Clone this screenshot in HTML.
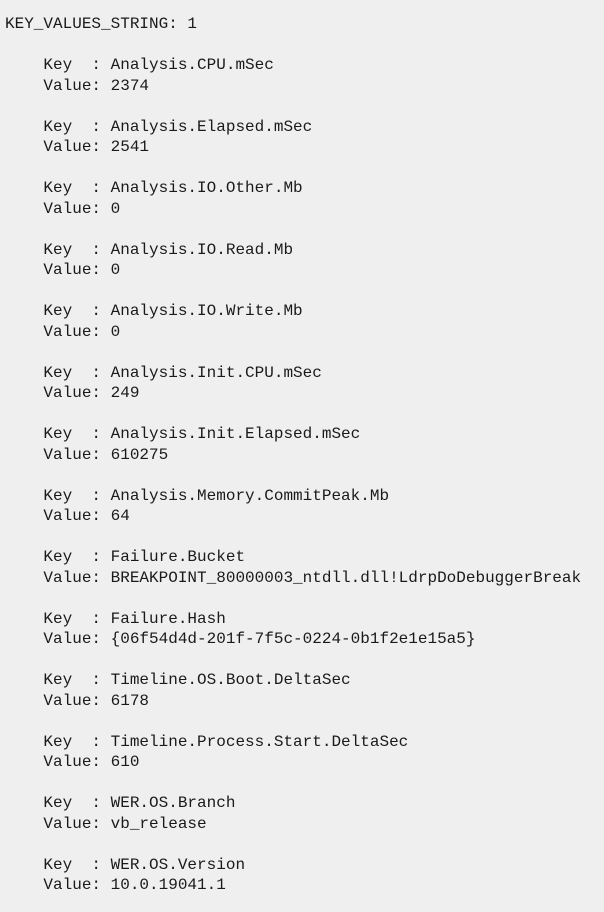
<!DOCTYPE html>
<html><head><meta charset="utf-8"><style>
html,body{margin:0;padding:0;background:#efefef;}
body{width:604px;height:912px;overflow:hidden;}
pre{margin:0;padding:14px 0 0 5px;font-family:"Liberation Mono",monospace;font-size:16px;line-height:20.5px;color:#1a1a1a;}
</style></head><body><pre>KEY_VALUES_STRING: 1

    Key  : Analysis.CPU.mSec
    Value: 2374

    Key  : Analysis.Elapsed.mSec
    Value: 2541

    Key  : Analysis.IO.Other.Mb
    Value: 0

    Key  : Analysis.IO.Read.Mb
    Value: 0

    Key  : Analysis.IO.Write.Mb
    Value: 0

    Key  : Analysis.Init.CPU.mSec
    Value: 249

    Key  : Analysis.Init.Elapsed.mSec
    Value: 610275

    Key  : Analysis.Memory.CommitPeak.Mb
    Value: 64

    Key  : Failure.Bucket
    Value: BREAKPOINT_80000003_ntdll.dll!LdrpDoDebuggerBreak

    Key  : Failure.Hash
    Value: {06f54d4d-201f-7f5c-0224-0b1f2e1e15a5}

    Key  : Timeline.OS.Boot.DeltaSec
    Value: 6178

    Key  : Timeline.Process.Start.DeltaSec
    Value: 610

    Key  : WER.OS.Branch
    Value: vb_release

    Key  : WER.OS.Version
    Value: 10.0.19041.1
</pre></body></html>
